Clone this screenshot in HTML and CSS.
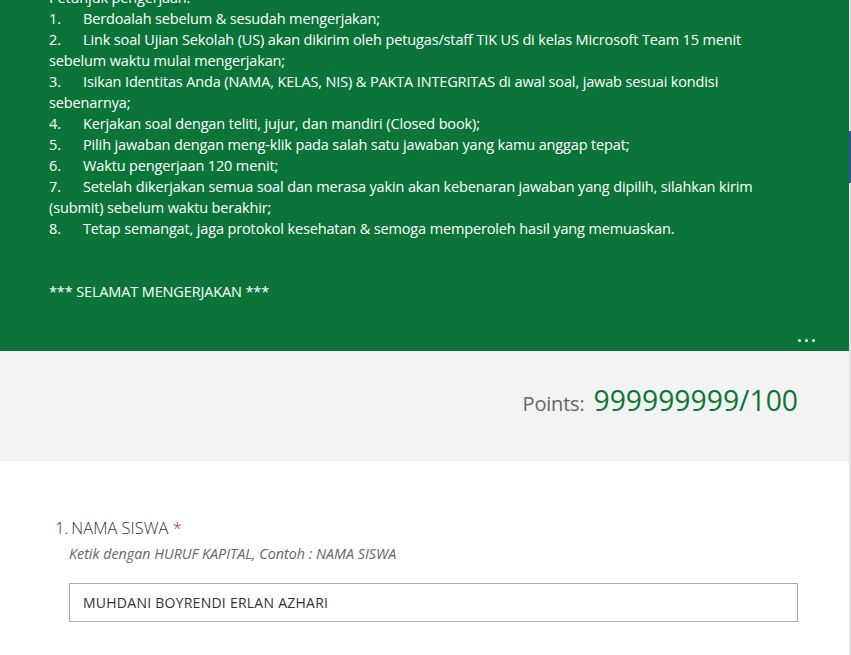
FILE: index.html
```html
<!DOCTYPE html>
<html>
<head>
<meta charset="utf-8">
<link rel="stylesheet" href="styles.css">
</head>
<body>
<div class="page">
  <div class="main">
    <section class="header">
      <div class="desc">
        <p>Petunjuk pengerjaan:</p>
        <p><span class="num">1.</span>Berdoalah sebelum &amp; sesudah mengerjakan;</p>
        <p><span class="num">2.</span>Link soal Ujian Sekolah (US) akan dikirim oleh petugas/staff TIK US di kelas Microsoft Team 15 menit sebelum waktu mulai mengerjakan;</p>
        <p><span class="num">3.</span>Isikan Identitas Anda (NAMA, KELAS, NIS) &amp; PAKTA INTEGRITAS di awal soal, jawab sesuai kondisi sebenarnya;</p>
        <p><span class="num">4.</span>Kerjakan soal dengan teliti, jujur, dan mandiri (Closed book);</p>
        <p><span class="num">5.</span>Pilih jawaban dengan meng-klik pada salah satu jawaban yang kamu anggap tepat;</p>
        <p><span class="num">6.</span>Waktu pengerjaan 120 menit;</p>
        <p><span class="num">7.</span>Setelah dikerjakan semua soal dan merasa yakin akan kebenaran jawaban yang dipilih, silahkan kirim (submit) sebelum waktu berakhir;</p>
        <p><span class="num">8.</span>Tetap semangat, jaga protokol kesehatan &amp; semoga memperoleh hasil yang memuaskan.</p>
        <p class="blank">&nbsp;</p>
        <p class="blank">&nbsp;</p>
        <p>*** SELAMAT MENGERJAKAN ***</p>
      </div>
      <div class="more" aria-label="More options"><span></span><span></span><span></span></div>
    </section>
    <section class="points">
      <span class="points-label">Points:</span>
      <span class="points-value">999999999/100</span>
    </section>
    <section class="body">
      <div class="question">
        <div class="q-title"><span class="q-num">1.</span>NAMA SISWA <span class="req">*</span></div>
        <div class="q-sub">Ketik dengan HURUF KAPITAL, Contoh : NAMA SISWA</div>
        <div class="q-input">MUHDANI BOYRENDI ERLAN AZHARI</div>
      </div>
    </section>
  </div>
  <div class="rail">
    <div class="rail-blue"></div>
  </div>
</div>
</body>
</html>
```

FILE: styles.css
```css
html, body {
  margin: 0;
  padding: 0;
  height: 100%;
  overflow: hidden;
  background: #ffffff;
}

body {
  font-family: "Segoe UI", "Open Sans", "Noto Sans", sans-serif;
}

.page {
  display: flex;
  height: 100%;
}

.main {
  flex: 1;
  display: flex;
  flex-direction: column;
  min-width: 0;
}

.rail {
  width: 2px;
  background: #e3e3e3;
  display: flex;
  flex-direction: column;
}

.rail-blue {
  height: 52px;
  margin-top: 131px;
  background: #2b5797;
}

.header {
  background: #0b7539;
  color: #ffffff;
  height: 351px;
  box-sizing: border-box;
  padding: 0 62px 0 49px;
  display: flex;
  flex-direction: column;
  overflow: hidden;
}

.desc {
  margin-top: -13px;
  font-size: 14.5px;
  line-height: 21px;
  letter-spacing: -0.14px;
}

.desc p {
  margin: 0;
}

.num {
  display: inline-block;
  width: 34px;
}

.more {
  margin-top: auto;
  margin-bottom: 9px;
  align-self: flex-end;
  margin-right: -28px;
  display: flex;
  gap: 4px;
}

.more span {
  width: 3px;
  height: 3px;
  border-radius: 50%;
  background: #ffffff;
}

.points {
  background: #f3f3f3;
  height: 110px;
  box-sizing: border-box;
  display: flex;
  justify-content: flex-end;
  align-items: baseline;
  padding: 30px 51px 0 0;
  gap: 9px;
}

.points-label {
  font-size: 20px;
  color: #666666;
  letter-spacing: -0.2px;
}

.points-value {
  font-size: 28.3px;
  color: #0b7539;
}

.body {
  flex: 1;
  background: #ffffff;
  padding: 56px 51px 0 55px;
}

.q-title {
  font-size: 16.5px;
  font-weight: 300;
  color: #333333;
  line-height: 22px;
}

.q-num {
  margin-right: 3px;
}

.req {
  color: #a4262c;
}

.q-sub {
  margin: 6px 0 0 14px;
  font-size: 14.3px;
  font-style: italic;
  color: #666666;
  line-height: 18px;
}

.q-input {
  margin: 20px 0 0 14px;
  height: 39px;
  box-sizing: border-box;
  border: 1px solid #ababab;
  padding: 0 13px;
  display: flex;
  align-items: center;
  font-size: 14px;
  color: #333333;
  letter-spacing: 0.25px;
}
```
